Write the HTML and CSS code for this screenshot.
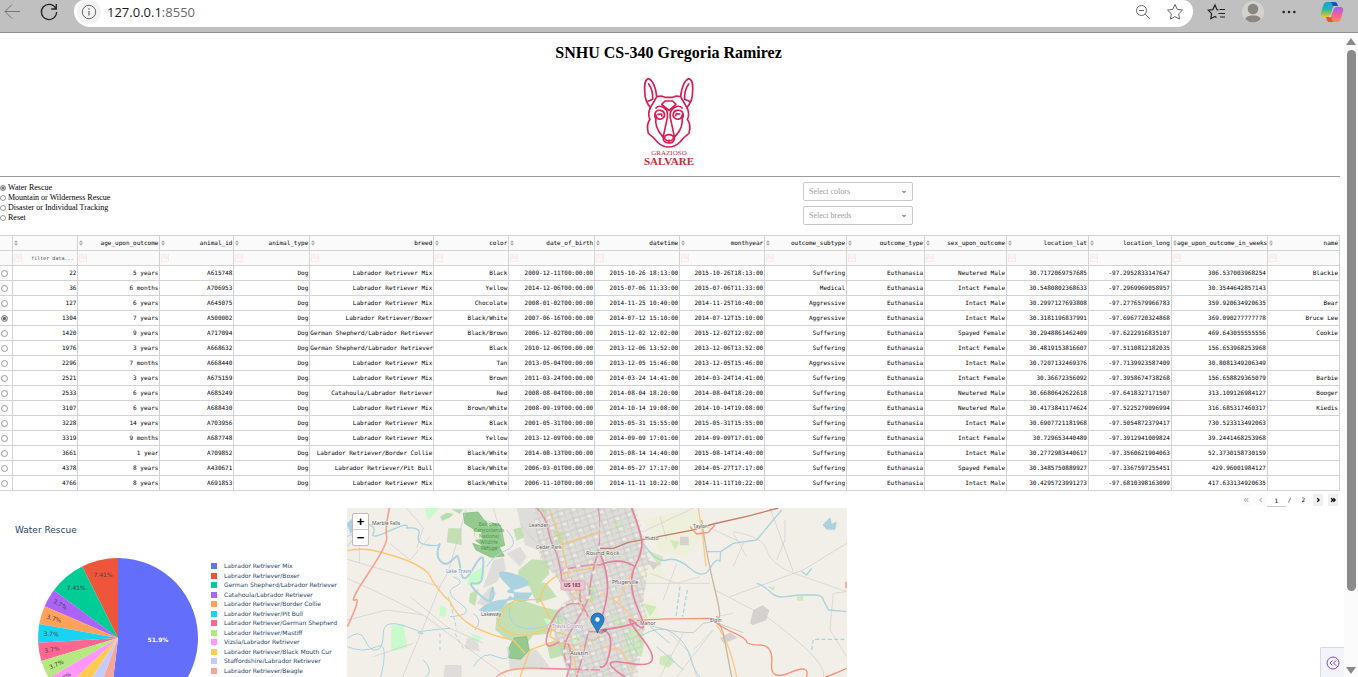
FILE: index.html
```html
<!DOCTYPE html>
<html lang="en">
<head>
<meta charset="utf-8">
<title>127.0.0.1:8550</title>
<link rel="stylesheet" href="styles.css">
</head>
<body>
<header class="toolbar">
  <button class="tool back" aria-label="Back"><svg width="20" height="20" viewBox="0 0 20 20"><path d="M18 9.500H3M10 2.500L3 9.500l7 7" stroke="#757575"/></svg></button>
  <button class="tool reload" aria-label="Reload"><svg width="20" height="20" viewBox="0 0 20 20"><path d="M16.800 6.500A7.600 7.600 0 1 0 17.600 10M17.300 2v5h-5" stroke="#222" stroke-width="1.300"/></svg></button>
  <div class="address">
    <button class="info" aria-label="Site information"><svg width="16" height="16" viewBox="0 0 16 16"><circle cx="8" cy="8" r="6.700" stroke="#666"/><path d="M8 7v4.500M8 4.300v1.400" stroke="#666" stroke-width="1.200"/></svg></button>
    <span class="url">127.0.0.1<span class="port">:8550</span></span>
    <button class="tool zoomout" aria-label="Zoom"><svg width="18" height="18" viewBox="0 0 18 18"><circle cx="7.500" cy="7.500" r="5" stroke="#666"/><path d="M11.200 11.200l4.600 4.600M5 7.500h5" stroke="#666"/></svg></button>
    <button class="tool" aria-label="Add to favorites"><svg width="18" height="18" viewBox="0 0 18 18"><path d="M9 1.500l2.300 4.900 5.200.7-3.800 3.700.9 5.300L9 13.600l-4.600 2.500.9-5.300L1.500 7.100l5.200-.7z" stroke="#666"/></svg></button>
  </div>
  <button class="tool" aria-label="Favorites"><svg width="20" height="18" viewBox="0 0 20 18"><path d="M11.500 7l-1.500-.3L8 2 5.800 6.600l-4.600.6 3.400 3.500-.8 5L8 13.500l1.500.9M12.500 6.500h5.500M11.500 10.500h6.500M13 14h5" stroke="#222" stroke-width="1.200"/></svg></button>
  <button class="tool profile" aria-label="Profile"><svg width="22" height="22" viewBox="0 0 22 22"><circle cx="11" cy="11" r="11" fill="#d4d2cf"/><circle cx="11" cy="8" r="5.300" fill="#8a8680"/><path d="M3.500 18.500c0-3 3-4 7.500-4s7.500 1 7.500 4a11 11 0 0 1-15 0z" fill="#8a8680"/></svg></button>
  <button class="tool" aria-label="More"><svg width="16" height="16" viewBox="0 0 16 16"><g fill="#222"><circle cx="2.700" cy="8" r="1.300"/><circle cx="8" cy="8" r="1.300"/><circle cx="13.300" cy="8" r="1.300"/></g></svg></button>
  <button class="tool copilot" aria-label="Copilot"><svg width="24" height="22" viewBox="0 0 24 22">
    <defs>
      <linearGradient id="ca" x1="0" y1="0" x2="0" y2="1"><stop offset="0" stop-color="#10a0e8"/><stop offset=".5" stop-color="#28b8a0"/><stop offset="1" stop-color="#f0c820"/></linearGradient>
      <linearGradient id="cb" x1="0" y1="0" x2="0" y2="1"><stop offset="0" stop-color="#a060f0"/><stop offset=".5" stop-color="#f060a0"/><stop offset="1" stop-color="#ff8a50"/></linearGradient>
    </defs>
    <path d="M7 1h8l-4 11q-1 4-4 4H4q-4 0-3-4l2-7Q4 1 7 1z" fill="url(#ca)"/><path d="M11 1h4q2 0 3 4h-5z" fill="#1850c8"/>
    <path d="M17 21H9l4-11q1-4 4-4h3q4 0 3 4l-2 7q-1 4-4 4z" fill="url(#cb)"/><path d="M13 21H9q-2 0-3-5h5z" fill="#f05030"/><path d="M13.500 6.500q-1 1-3 9.500l-1.500.2q2-1 3-6.200 .500-3 1.500-3.500z" fill="#f0f0fa"/>
  </svg></button>
</header>

<div class="viewport">
<main class="page">
  <section class="brand">
    <h1>SNHU CS-340 Gregoria Ramirez</h1>
    <svg class="logo" width="60" height="94" viewBox="0 0 60 94" role="img" aria-label="Grazioso Salvare">
      <g transform="translate(-19 -5) scale(.3333)" fill="none" stroke="#d81e55" stroke-width="5" stroke-linejoin="round" stroke-linecap="round">
        <path d="M110 80C107 48 96 28 84 26C70 32 74 60 75 76C77 95 84 104 91 112C85 126 84 137 90 148C81 158 81 174 85 190C96 198 105 206 112 216C122 226 131 231 146 231C161 231 170 226 180 216C187 206 196 198 207 190C211 174 211 158 202 148C208 137 207 126 201 112C208 104 215 95 217 76C218 60 222 32 208 26C196 28 185 48 182 80"/>
        <path d="M110 80L124 78L135 82H158L169 78L182 80M108 84L90 115M184 84L202 115M86 42C96 56 99 72 98 88L84 94M206 42C196 56 193 72 194 88L208 94"/>
        <path d="M135 93H158L168 103L147 121L125 103ZM108 114C116 104 132 110 139 120C143 128 144 136 141 148L130 199C128 211 133 219 147 219C160 219 165 211 163 199L152 148C149 136 150 128 155 120C162 110 178 104 186 114M105 142C102 124 112 120 122 121C135 123 137 140 128 145C118 152 107 144 108 135M189 142C192 124 182 120 171 121C158 123 156 140 165 145C175 152 187 144 186 135M108 142C104 162 114 184 128 200M186 142C190 162 180 184 165 200"/>
        <path d="M135 198Q147 190 159 198Q164 211 147 213Q130 211 135 198M147 210V218"/>
        <path d="M114 133l10-1 2 6M179 132l-10-1-2 6"/>
      </g>
      <text x="30" y="80" class="logo-top">GRAZIOSO</text>
      <text x="30" y="90" class="logo-name">SALVARE</text>
    </svg>
  </section>

  <section class="filters">
    <div class="rescue">
      <label><input type="radio" name="rescue" checked>Water Rescue</label>
      <label><input type="radio" name="rescue">Mountain or Wilderness Rescue</label>
      <label><input type="radio" name="rescue">Disaster or Individual Tracking</label>
      <label><input type="radio" name="rescue">Reset</label>
    </div>
    <div class="selects">
      <select aria-label="Select colors"><option>Select colors</option></select>
      <select aria-label="Select breeds"><option>Select breeds</option></select>
    </div>
  </section>

  <table class="data">
    <colgroup id="cols"></colgroup>
    <thead id="head"></thead>
    <tbody id="rows"></tbody>
  </table>

  <nav class="pager" aria-label="Table pages">
    <button disabled aria-label="First page"><svg width="6" height="6" viewBox="0 0 8 8"><path d="M4 1.500L1.500 4 4 6.500M7 1.500L4.500 4 7 6.500"/></svg></button>
    <button class="previous" disabled aria-label="Previous page"><svg width="6" height="6" viewBox="0 0 8 8"><path d="M5 1.500L2.500 4 5 6.500"/></svg></button>
    <input class="current" value="1" aria-label="Page">
    <span class="slash">/</span>
    <span class="last">2</span>
    <button aria-label="Next page"><svg width="6" height="6" viewBox="0 0 8 8"><path d="M3 1.500L5.500 4 3 6.500"/></svg></button>
    <button aria-label="Last page"><svg width="6" height="6" viewBox="0 0 8 8"><path d="M1.500 1.500L4 4 1.500 6.500M4.500 1.500L7 4 4.500 6.500M2 4h4"/></svg></button>
  </nav>

  <section class="charts">
    <figure class="pie">
      <figcaption>Water Rescue</figcaption>
      <div class="pie-body">
        <svg id="pie" width="162" height="162" viewBox="-81 -81 162 162" role="img" aria-label="Breed share"></svg>
        <ul id="legend"></ul>
      </div>
    </figure>
    <div class="map">
      <svg width="500" height="250" viewBox="0 0 500 250" preserveAspectRatio="xMinYMin slice" role="img" aria-label="Map of the Austin area">
        <defs>
          <pattern id="streets" width="13" height="11" patternUnits="userSpaceOnUse" patternTransform="rotate(-18)">
            <path d="M0 3h13M4 0v11M0 8h8M10 3v8" stroke="#c3c2c0" stroke-width=".7" fill="none"/>
            <path d="M5 4h4v3H5z" fill="#ebe9e2"/><path d="M11 8h2v2h-2z" fill="#cfe6bd"/>
          </pattern>
        </defs>
        <rect width="500" height="250" fill="#f2efe9"/>
        <g transform="translate(-7 -8) scale(.3333)" fill="none" stroke-linejoin="round">
          <g fill="#deddd9">
            <path d="M570 24L790 24 790 540H690L670 470 640 440 650 330 690 300 650 230 610 190 590 120z"/>
            <path d="M530 24h55l25 40-10 90-45-20zM460 180l30-8 8 36-30 40-40 16zM500 440l90 10 40 50-120 10zM380 415l30 0 10 40-45-10zM315 495h50v40h-55zM500 160l40-20 20 30-20 30zM410 310l40-50 20 20-30 40z"/>
          </g>
          <g fill="#c4dfb2">
            <path d="M536 210l40-32 46 4 6 40-40 40-58-8zM500 310l50-8 60 20 50 10 10 40-50 30-40 4-20 26-60-14-34-28 4-50zM560 240l60 10 30 40-60 20zM325 85l40 0 0 50-45-8zM740 250l20 10 10 40-20 6zM620 430l50-8 20 40-60 14zM640 90l30 8 0 30-22 10zM390 280l25-12-10 50-18-12zM520 88l24-6 8 30-22 10zM590 24h30v20z"/>
          </g>
          <g fill="#c8facc"><path d="M154 378l36-6 12 70-48 12zM390 225l45-30-15 60-40 0zM254 24h45l-35 38zM302 315l18 10-5 28-18-6zM390 400l40 12-20 18zM610 355l30 5-10 30zM690 400l30 5-20 30z"/></g>
          <path d="M370 40l44-4 20 26 48 14 12 60-46 16-40-30-6-34-28-18zM398 130l30 10 50 2 15 26-40 4-45-22zM508 440l14-26 38-4 8 40-26 28-34-4z" fill="#94ca90" stroke="#76b773" stroke-width="2"/>
          <path d="M402 92l20 4 6 20-22 4zM440 62l20 8-16 10z" fill="#e6eed9"/>
          <path d="M300 50l20-12 22 4-14 12-22 8zM335 28l34 0-10 14z" fill="#b5deb0"/>
          <g stroke="#aad3df" stroke-width="3">
            <path d="M22 80Q50 60 80 70T100 100T150 92T200 84Q245 80 236 105T262 135T300 130" stroke-width="4"/>
            <path d="M300 130Q285 165 300 182T330 186T350 168T362 212T400 205T430 188T425 240T400 250T420 285T460 280T450 300" stroke-width="6"/>
            <path d="M420 330Q450 300 500 300T500 250T525 225T530 265T575 280L560 300Q530 310 510 290L480 330L430 334Z" fill="#aad3df" stroke-width="5"/>
            <path d="M340 230Q380 245 345 260T360 310T330 350M440 200Q460 165 500 150T500 90M22 415Q60 385 75 420T110 450T130 400T200 380T240 400T330 385M22 440Q70 460 110 440T120 540M400 340q30 20 5 50M510 320Q500 380 560 385T640 360T700 380T770 420M250 480q40 40-10 60M400 500Q430 450 470 470T510 450M22 110L60 90 22 140"/>
            <path d="M325 290q15 50 25 100M345 400q20 40 30 50M300 400v50" stroke-dasharray="12 8"/>
            <path d="M22 70l24-20 10 20-24 30z" fill="#aad3df"/>
          </g>
          <g stroke="#d2c6d0" stroke-width="2">
            <path d="M22 178L300 260 325 215 378 30M300 260L188 531M250 345L500 531M58 140v50"/>
          </g>
          <g stroke="#cfcbca" stroke-width="2">
            <path d="M22 235L130 285 250 345M150 130L210 180 270 110M200 24l50 60-20 60M22 360L140 330 250 345M210 290L320 380 430 430M100 470l120-40M540 70l50 60M460 24l30 100"/>
          </g>
          <g stroke="#fcc66f" stroke-width="4">
            <path d="M22 152Q80 140 140 162Q230 185 265 220Q290 270 330 305Q350 350 400 380Q460 410 520 420L555 460M630 30Q660 110 665 130T685 230L720 290 760 310M660 135L780 95M475 370Q480 320 530 300L600 298Q610 240 670 220L780 200M475 370Q500 410 570 405L620 385 720 420M600 298L640 370 630 410 700 450 710 531M540 531L570 450 640 425 720 440 780 410M680 260L780 400"/>
          </g>
          <g stroke="#f6a58d" stroke-width="5"><path d="M148 24Q135 90 140 110T85 220T45 300T22 380M470 531Q500 500 600 505"/></g>
          <g stroke="#e88aa4" stroke-width="5">
            <path d="M590 24Q620 55 625 90T650 160Q665 215 665 240L720 270 720 300 745 350M775 24Q790 100 770 170T750 270T700 380T690 500L680 531M665 210Q760 190 780 195M720 312Q660 300 630 380T650 430T690 500M745 395L780 395M745 395L730 460 710 531M600 505L780 510"/>
          </g>
        </g>
        <g transform="translate(253 -8) scale(.3333)" fill="none" stroke-linejoin="round">
          <path d="M0 24H100L130 120 150 200 130 290 140 360 120 430 100 531H0z" fill="#deddd9"/>
          <path d="M130 60l70-20 90-10 30 60-60 80-80-10zM110 200l60-10 30 40-60 20zM120 310l40-20 20 60-50 10z" fill="#eef0dc"/>
          <g fill="#cfe8bc"><path d="M75 390l40-10 20 40-10 50-50-10zM180 470l30-8 14 24-20 18-26-12zM30 340l50 20-20 30zM130 310l40 10-20 30zM140 150l50 20-10 30zM590 290l20-4v16h-18zM504 260l22 0-6 12zM40 60l30 10-20 30zM210 120l30 5-15 25z"/></g>
          <path d="M450 370l10-40 28-14 20 15-10 30-40 14zM360 415l30-18 22 16-40 18zM240 110h26v26h-26zM140 180l40 10-20 20z" fill="#d4d1cf"/>
        </g>
        <path d="M186 0H289L303 50 296 90 300 110 290 169H222L212 140 206 120 215 96 224 90 208 68 193 52z" fill="url(#streets)"/>
        <g transform="translate(253 -8) scale(.3333)" fill="none" stroke-linejoin="round">
          <g stroke="#d0cecb" stroke-width="2"><path d="M150 220L230 250 300 230M190 300l40-110M280 450l60-60M230 531L340 390M130 95L280 24M180 50l20 70M210 400l60 60 20 71M320 80L430 130 400 200M400 100L440 170M400 95Q490 110 500 150T580 220L640 240 740 275M740 275L700 280 690 390 740 470M250 400L180 531M130 250L330 250M400 340L350 350"/><path d="M130 370Q220 400 280 398L310 370 340 365 430 398" stroke="#b9b5b2"/></g>
          <g stroke="#d2c6d0" stroke-width="2"><path d="M345 270Q440 320 480 340T600 430T670 531M390 290L610 210 740 130M510 24L580 215M555 60v60L530 180"/></g>
          <g stroke="#aad3df" stroke-width="4"><path d="M130 130Q170 190 200 180T270 205T330 205T360 185L362 155 320 155M362 155L400 130 470 120 545 30M470 250Q490 255 510 275T560 290T600 285T640 285T670 300L685 330 740 335M605 215l15 10 15-20"/><path d="M240 260l-12 90M262 270l-14 80M635 450l5-32h100" stroke-dasharray="12 7"/><path d="M120 410Q180 370 220 400T270 470T300 531M170 440l80 70M150 380l60 50M80 400l30 60" stroke-width="3"/><path d="M670 75l20-20 4 20 14-8-4 20-22 0z" fill="#aad3df"/></g>
          <path d="M295 24Q310 110 318 200M0 280Q60 300 100 360M350 375Q390 430 410 531M100 210L50 310M0 440l60 10 40 60" stroke="#fcc98a" stroke-width="4"/>
          <path d="M305 60Q320 170 345 270T350 350L370 400 395 531" stroke="#c9b7a0" stroke-width="4"/>
          <path d="M0 145L40 145 85 127 270 92 340 72 450 47 535 24" stroke="#c27c6b" stroke-width="4"/>
          <path d="M270 80l20 22 35-5 20-22M110 362Q180 355 330 355Q360 380 400 398T440 425T480 435T515 490T570 518T620 528T740 505M738 245v20" stroke="#f49377" stroke-width="4"/>
          <path d="M95 24Q120 90 125 120T105 200T115 330T105 370T130 420T90 490T75 531M0 195Q60 170 105 200M0 390Q60 385 110 368M0 160Q30 230 20 290T0 360M0 390Q40 390 30 450T0 500" stroke="#e77f9d" stroke-width="5"/>
        </g>
        <rect x="214" y="73" width="24" height="9" rx="1" fill="#edc6d0" stroke="#e29ab0" stroke-width=".7"/>
        <g class="places">
          <text x="25" y="17">Marble Falls</text><text x="182" y="19">Leander</text><text x="189" y="41">Cedar Park</text><text x="134" y="108">Lakeway</text>
          <text x="265" y="76">Pflugerville</text><text x="298" y="32">Hutto</text><text x="346" y="20">Taylor</text><text x="293" y="117">Manor</text><text x="363" y="114">Elgin</text>
          <text x="239" y="47" class="city">Round Rock</text><text x="223" y="147" class="city">Austin</text>
          <text x="99" y="65" class="water">Lake Travis</text><text x="205" y="120" class="county">Travis County</text>
          <text x="217" y="79" class="road">US 183</text>
        </g>
        <g class="refuge"><text x="142" y="18">Balcones</text><text x="142" y="24">Canyonlands</text><text x="142" y="30">National</text><text x="142" y="36">Wildlife</text><text x="142" y="42">Refuge</text></g>
        <path d="M251 125l7-5 3 2-6 4z" fill="#555" opacity=".4"/>
        <path d="M250.500 125C248 118 244 116 244 111.500a6.500 6.500 0 0 1 13 0C257 116 253 118 250.500 125z" fill="#2a81cb" stroke="#2469a5"/><circle cx="250.500" cy="111.500" r="2.200" fill="#fff"/>
      </svg>
      <div class="map-zoom"><button aria-label="Zoom in">+</button><button aria-label="Zoom out">−</button></div>
    </div>
  </section>
  <button class="debug" aria-label="Open developer tools"><svg width="14" height="14" viewBox="0 0 14 14"><circle cx="7" cy="7" r="6"/><path d="M6.500 4.500L4 7l2.500 2.500M10 4.500L7.500 7 10 9.500"/></svg></button>
</main>
<div class="scroll" aria-hidden="true"><i class="up"></i><i class="thumb"></i><i class="down"></i></div>
</div>
<script src="app.js"></script>
</body>
</html>
```
FILE: styles.css
```css
* { box-sizing: border-box; }
body {
  margin: 0;
  height: 100vh;
  display: flex;
  flex-direction: column;
  overflow: hidden;
  background: #fff;
  color: #000;
  font-family: "Liberation Serif", serif;
}
button { border: 0; padding: 0; margin: 0; background: none; font: inherit; display: grid; place-items: center; }
svg { display: block; }

.toolbar {
  flex: none;
  height: 33px;
  display: flex;
  align-items: flex-start;
  gap: 12px;
  padding-right: 14px;
  background: #c0c0c0;
  border-bottom: 1px solid #8e8e8e;
}
.tool { height: 24px; width: 24px; }
.toolbar svg { fill: none; }
.reload { margin-left: 1px; }
.copilot { margin-left: 7px; }
.address {
  flex: 1;
  height: 27px;
  margin-left: 1px;
  padding: 0 6px 3px 3px;
  display: flex;
  gap: 6px;
  align-items: flex-start;
  background: #fff;
  border-radius: 10px 10px 16px 16px;
}
.info { width: 24px; height: 24px; border-radius: 12px; background: #f3f3f3; }
.url { flex: 1; font: 13px/24px "Open Sans", sans-serif; color: #1a1a1a; }
.port { color: #6b6b6b; }
.zoomout { margin-right: 2px; }

.viewport { flex: 1; min-height: 0; display: flex; }
.page { position: relative; flex: 1; min-width: 0; overflow: hidden; padding-right: 4px; }

.brand {
  height: 144px;
  display: flex;
  flex-direction: column;
  align-items: center;
  padding: 10px 3px 0 0;
  border-bottom: 1px solid #9a9a9a;
}
h1 { margin: 0 0 12px; font-size: 16px; line-height: 20px; }
.logo-top, .logo-name { text-anchor: middle; fill: #d22a35; font-size: 7px; }
.logo-name { font-size: 11px; font-weight: bold; }

.filters { display: grid; grid-template-columns: 3fr 2fr; height: 58px; }
.rescue { padding-top: 6px; font-size: 8px; line-height: 10px; }
.rescue label { display: flex; align-items: center; gap: 2px; }
input[type=radio] {
  appearance: none;
  flex: none;
  width: 6px;
  height: 6px;
  margin: 0;
  border: 1px solid #9a9a9a;
  border-radius: 50%;
  background: #fff;
}
input[type=radio]:checked { background: #555; box-shadow: inset 0 0 0 1px #ddd; }
.selects { display: flex; flex-direction: column; gap: 5px; padding-top: 5px; }
.selects select {
  appearance: none;
  width: 110px;
  height: 19px;
  margin-left: -1px;
  padding: 0 5px;
  border: 1px solid #c8c8c8;
  border-radius: 2px;
  color: #a0a0a0;
  font: 8px "Liberation Serif", serif;
  background: linear-gradient(#999, #999) 98px 8px / 4px 1px no-repeat, linear-gradient(#999, #999) 99px 9px / 2px 1px no-repeat, #fff;
}

.data {
  width: 100%;
  table-layout: fixed;
  border-collapse: collapse;
  font: 6px/8px "DejaVu Sans Mono", monospace;
}
.data th, .data td {
  height: 15px;
  padding: 0 1px 0 0;
  border: 1px solid #d3d3d3;
  text-align: right;
  font-weight: normal;
  white-space: nowrap;
}
.data tr > :first-child { border-left: 0; padding: 1px 0 0 1px; text-align: left; }
.data thead th { background: #fafafa; }
.data td input[type=radio] { display: block; width: 7px; height: 7px; }
.head-cell { display: flex; align-items: center; justify-content: space-between; padding-left: 1px; }
.head-cell svg { flex: none; fill: #aaa; }
.filter-cell { display: flex; align-items: center; justify-content: space-between; gap: 1px; padding: 0 3px 0 1px; }
.case { flex: none; width: 8px; height: 8px; border: 1px solid #fce8ea; color: #fbe2e5; font: 5px/5px "DejaVu Sans", sans-serif; }
.filter-cell input {
  min-width: 0;
  flex: 1;
  height: 10px;
  border: 0;
  padding: 0;
  background: none;
  text-align: right;
  font: 5px/8px "DejaVu Sans Mono", monospace;
}
.filter-cell input::placeholder { color: #444; opacity: 1; }

.pager {
  height: 17px;
  display: flex;
  align-items: center;
  justify-content: flex-end;
  gap: 5px;
  padding-right: 2px;
  font: 6px/10px "DejaVu Sans Mono", monospace;
}
.pager button { width: 10px; height: 12px; background: #efefef; }
.pager button:disabled { background: #fafafa; }
.pager svg { fill: none; stroke: #000; stroke-width: 1.6; }
.pager button:disabled svg { stroke: #bbb; }
.pager .previous { margin-right: -4px; }
.current {
  width: 19px;
  height: 15px;
  padding: 2px 0 0;
  border: 0;
  border-bottom: 1px solid #c8c8c8;
  text-align: center;
  font: inherit;
}
.slash { margin-left: -3px; }
.last { padding: 0 3px 0 5px; }

.charts { display: flex; height: 250px; }
.pie { width: 347px; margin: 0; padding: 16px 0 0 15px; font-family: "DejaVu Sans", sans-serif; color: #2a3f5f; }
.pie figcaption { font-size: 9px; line-height: 12px; }
.pie-body { display: flex; align-items: flex-start; gap: 11px; padding: 21px 0 0 22px; }
.pie ul { margin: 0; padding: 4px 0 0 1px; list-style: none; font-size: 6px; }
.pie li { display: flex; align-items: center; gap: 7px; height: 9px; margin-bottom: 1px; white-space: nowrap; }
.pie li:nth-child(2n) { margin-bottom: 0; }
.pie li svg { flex: none; }
.pie text { font-size: 6px; text-anchor: middle; fill: #444; }
.pie text.main { fill: #fff; font-weight: bold; }

.map { position: relative; width: 500px; overflow: hidden; background: #f2efe9; }
.map text { font-family: "Noto Sans", sans-serif; font-size: 5px; fill: #555; paint-order: stroke; stroke: #f7f5f1; stroke-width: 1px; }
.map text.city { font-size: 6px; }
.map text.water { fill: #6b95c9; }
.map text.county { fill: #b08ab8; }
.map text.road { fill: #804050; stroke: none; font-weight: bold; }
.map .refuge text { fill: #4c9c4c; stroke: none; text-anchor: middle; }
.map-zoom { position: absolute; left: 5px; top: 5px; width: 17px; border: 1px solid #bbb; border-radius: 2px; background: #fff; }
.map-zoom button { width: 15px; height: 15px; font: bold 13px/15px "Liberation Sans", sans-serif; }
.map-zoom button + button { border-top: 1px solid #ccc; height: 16px; }

.debug {
  position: absolute;
  right: 0;
  bottom: 0;
  width: 24px;
  height: 30px;
  background: #f3f4fa;
  border: 1px solid #d5d8e8;
  border-width: 1px 0 0 1px;
  border-radius: 2px 0 0 0;
}
.debug svg { fill: none; stroke: #7f4bc4; }

.scroll { width: 14px; flex: none; display: flex; flex-direction: column; align-items: center; gap: 5px; padding: 5px 0 3px; background: #fbfbfb; }
.scroll .up { border: 5px solid transparent; border-top: 0; border-bottom: 7px solid #888; }
.scroll .thumb { width: 9px; height: 85%; border-radius: 5px; background: #8a8a8a; }
.scroll .down { margin-top: auto; border: 5px solid transparent; border-bottom: 0; border-top: 7px solid #888; }
```
FILE: app.js
```js
const columns = [
  ["", 65], ["age_upon_outcome", 82], ["animal_id", 74], ["animal_type", 76], ["breed", 124],
  ["color", 75], ["date_of_birth", 86], ["datetime", 85], ["monthyear", 85], ["outcome_subtype", 82],
  ["outcome_type", 78], ["sex_upon_outcome", 82], ["location_lat", 82], ["location_long", 83],
  ["age_upon_outcome_in_weeks", 96], ["name", 72]
];
const LM = "Labrador Retriever Mix";
const GL = "German Shepherd/Labrador Retriever";
// index, age, id, breed, color, birth, date, time, subtype, sex, lat, long, weeks, name
const records = [
  [22, "5 years", "A615748", LM, "Black", "2009-12-11", "2015-10-26", "18:13:00", "Suffering", "Neutered Male", "30.7172069757685", "-97.2952833147647", "306.537003968254", "Blackie"],
  [36, "6 months", "A706953", LM, "Yellow", "2014-12-06", "2015-07-06", "11:33:00", "Medical", "Intact Female", "30.5480802368633", "-97.2969969058957", "30.3544642857143", ""],
  [127, "6 years", "A645075", LM, "Chocolate", "2008-01-02", "2014-11-25", "10:40:00", "Aggressive", "Intact Male", "30.2997127693808", "-97.2776579966783", "359.920634920635", "Bear"],
  [1304, "7 years", "A500002", "Labrador Retriever/Boxer", "Black/White", "2007-06-16", "2014-07-12", "15:10:00", "Aggressive", "Intact Male", "30.3181196837991", "-97.6967720324868", "369.090277777778", "Bruce Lee"],
  [1420, "9 years", "A717094", GL, "Black/Brown", "2006-12-02", "2015-12-02", "12:02:00", "Suffering", "Spayed Female", "30.2948861462409", "-97.6222916835107", "469.643055555556", "Cookie"],
  [1976, "3 years", "A668632", GL, "Black", "2010-12-06", "2013-12-06", "13:52:00", "Suffering", "Intact Female", "30.4819153816607", "-97.5110812182035", "156.653968253968", ""],
  [2296, "7 months", "A668440", LM, "Tan", "2013-05-04", "2013-12-05", "15:46:00", "Aggressive", "Intact Male", "30.7207132469376", "-97.7139923587409", "30.8081349206349", ""],
  [2521, "3 years", "A675159", LM, "Brown", "2011-03-24", "2014-03-24", "14:41:00", "Suffering", "Intact Female", "30.36672356092", "-97.3958674738268", "156.658829365079", "Barbie"],
  [2533, "6 years", "A685249", "Catahoula/Labrador Retriever", "Red", "2008-08-04", "2014-08-04", "18:20:00", "Suffering", "Neutered Male", "30.6680642622618", "-97.6418327171507", "313.109126984127", "Booger"],
  [3107, "6 years", "A688430", LM, "Brown/White", "2008-09-19", "2014-10-14", "19:08:00", "Suffering", "Neutered Male", "30.4173841174624", "-97.5225279096994", "316.685317460317", "Kiedis"],
  [3228, "14 years", "A703956", LM, "Black", "2001-05-31", "2015-05-31", "15:55:00", "Suffering", "Intact Male", "30.6907721181968", "-97.5054872379417", "730.523313492063", ""],
  [3319, "9 months", "A687748", LM, "Yellow", "2013-12-09", "2014-09-09", "17:01:00", "Suffering", "Intact Female", "30.729653440489", "-97.3912941009824", "39.2441468253968", ""],
  [3661, "1 year", "A709852", "Labrador Retriever/Border Collie", "Black/White", "2014-08-13", "2015-08-14", "14:40:00", "Suffering", "Intact Male", "30.2772983440617", "-97.3560621904063", "52.3730158730159", ""],
  [4378, "8 years", "A430671", "Labrador Retriever/Pit Bull", "Black/White", "2006-03-01", "2014-05-27", "17:17:00", "Suffering", "Spayed Female", "30.3485750889927", "-97.3367597255451", "429.96001984127", ""],
  [4766, "8 years", "A691853", LM, "Black/White", "2006-11-10", "2014-11-11", "10:22:00", "Suffering", "Intact Male", "30.4295723991273", "-97.6810398163099", "417.633134920635", ""]
];

const sortIcon = '<svg width="4" height="8" viewBox="0 0 4 8"><path d="M0 3.500L2 1.200 4 3.500zM0 4.500h4L2 6.800z"/></svg>';
const pct = w => (w / 13.4).toFixed(3) + "%";
document.getElementById("cols").innerHTML =
  [13, ...columns.map(c => c[1])].map(w => `<col style="width:${pct(w)}">`).join("");
document.getElementById("head").innerHTML =
  "<tr><th></th>" + columns.map(c => `<th><div class="head-cell">${sortIcon}<span>${c[0]}</span></div></th>`).join("") + "</tr>" +
  "<tr><th></th>" + columns.map((c, i) =>
    `<th><div class="filter-cell"><span class="case">Aa</span><input aria-label="Filter ${c[0] || "index"}"${i ? "" : ' placeholder="filter data..."'}></div></th>`).join("") + "</tr>";
document.getElementById("rows").innerHTML = records.map(r => {
  const [idx, age, id, breed, color, birth, day, time, sub, sex, lat, lon, weeks, name] = r;
  const cells = [idx, age, id, "Dog", breed, color, birth + "T00:00:00", day + " " + time, day + "T" + time, sub, "Euthanasia", sex, lat, lon, weeks, name];
  return `<tr><td><input type="radio" name="row" aria-label="Select row ${idx}"${idx === 1304 ? " checked" : ""}></td>` +
    cells.map(c => `<td>${c}</td>`).join("") + "</tr>";
}).join("");

const slices = [
  [LM, 14, "#636efa"], ["Labrador Retriever/Boxer", 2, "#ef553b"], [GL, 2, "#00cc96"],
  ["Catahoula/Labrador Retriever", 1, "#ab63fa"], ["Labrador Retriever/Border Collie", 1, "#ffa15a"],
  ["Labrador Retriever/Pit Bull", 1, "#19d3f3"], ["Labrador Retriever/German Shepherd", 1, "#ff6692"],
  ["Labrador Retriever/Mastiff", 1, "#b6e880"], ["Vizsla/Labrador Retriever", 1, "#ff97ff"],
  ["Labrador Retriever/Black Mouth Cur", 1, "#fecb52"], ["Staffordshire/Labrador Retriever", 1, "#c8caff"],
  ["Labrador Retriever/Beagle", 1, "#f6a799"]
];
const R = 80, total = 27;
const at = (deg, r) => [Math.sin(deg * Math.PI / 180) * r, -Math.cos(deg * Math.PI / 180) * r].map(v => v.toFixed(2));
// The largest slice runs clockwise from the top, the others counterclockwise.
let angle = 0, shapes = "", labels = "";
slices.forEach(([, n, fill], i) => {
  const span = n / total * 360;
  const from = i ? angle - span : 0, to = i ? angle : span;
  if (i) angle -= span;
  const mid = (from + to) / 2;
  shapes += `<path d="M0 0L${at(from, R)}A${R} ${R} 0 ${span > 180 ? 1 : 0} 1 ${at(to, R)}Z" fill="${fill}"/>`;
  const [x, y] = at(mid, i === 0 ? 40 : n === 2 ? 65 : 67);
  const turn = n === 1 ? mid + 90 : 0;
  labels += `<text${i ? "" : ' class="main"'} transform="translate(${x} ${y}) rotate(${turn.toFixed(1)})" y="2">${i ? (n === 2 ? "7.41%" : "3.7%") : "51.9%"}</text>`;
});
document.getElementById("pie").innerHTML = shapes + labels;
document.getElementById("legend").innerHTML = slices.map(([name, , fill]) =>
  `<li><svg width="6" height="6"><rect width="6" height="6" fill="${fill}"/></svg>${name}</li>`).join("");
```
